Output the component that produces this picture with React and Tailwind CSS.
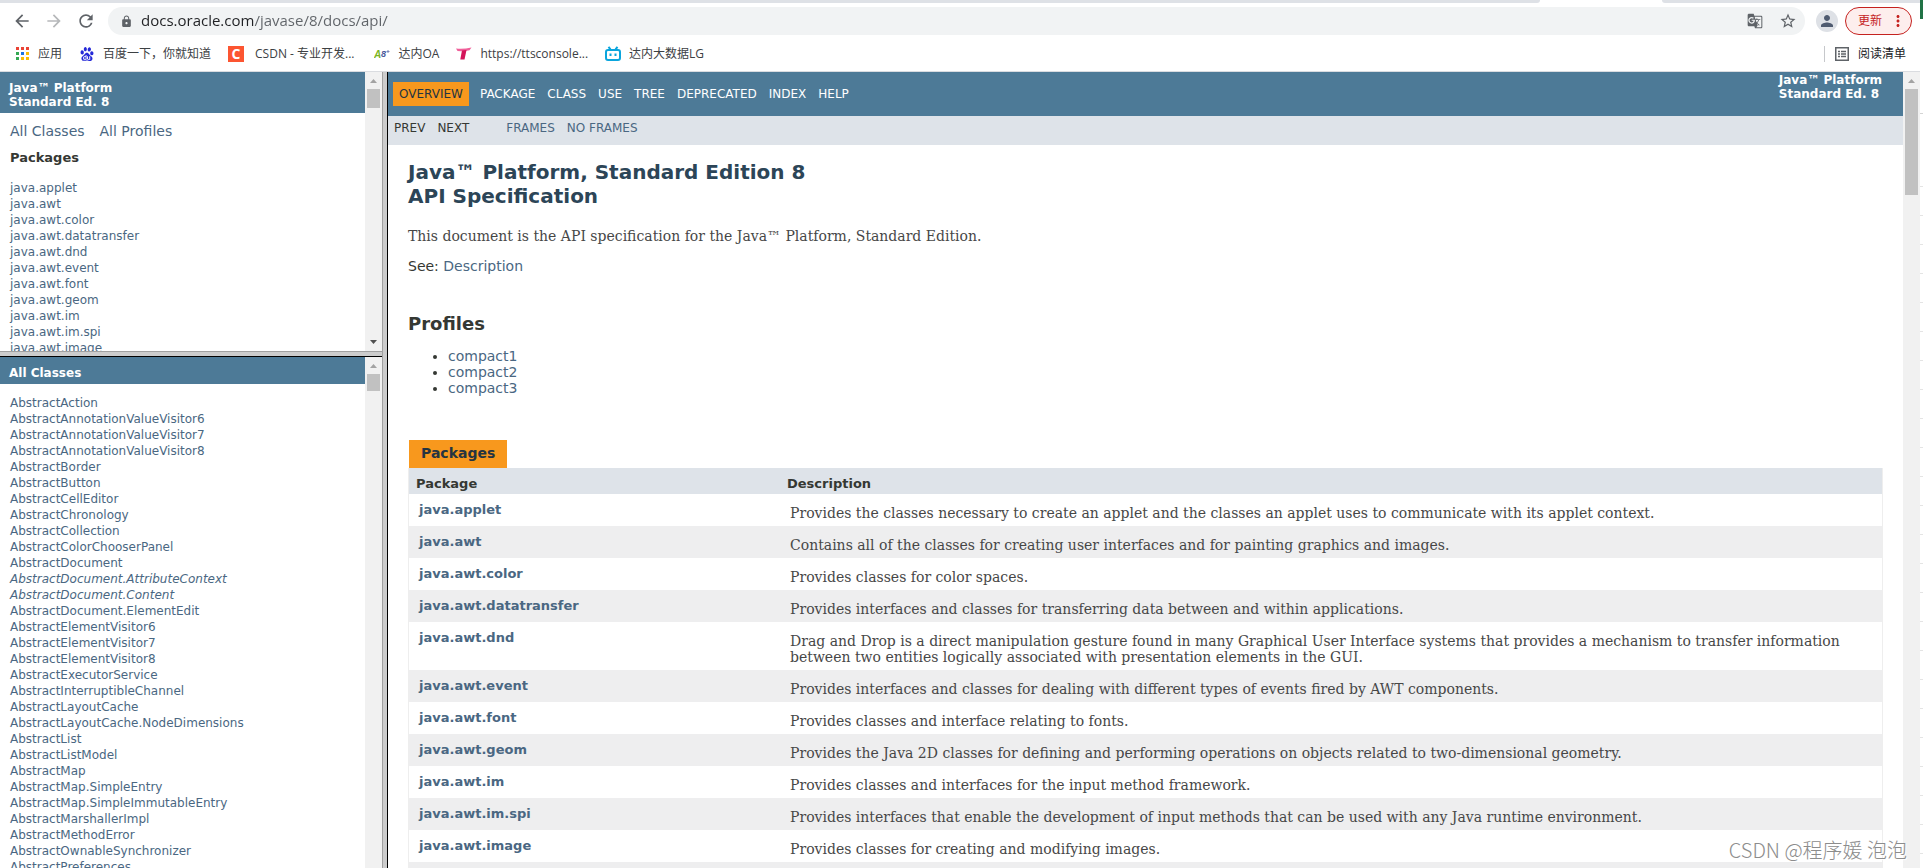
import React, { useState } from 'react';
import {
  MdArrowBack,
  MdArrowForward,
  MdRefresh,
  MdLock,
  MdGTranslate,
  MdStarBorder,
  MdPerson,
  MdMoreVert,
} from 'react-icons/md';
import { SiBaidu } from 'react-icons/si';

const packageList = [
  'java.applet',
  'java.awt',
  'java.awt.color',
  'java.awt.datatransfer',
  'java.awt.dnd',
  'java.awt.event',
  'java.awt.font',
  'java.awt.geom',
  'java.awt.im',
  'java.awt.im.spi',
  'java.awt.image',
];

const classList = [
  { name: 'AbstractAction' },
  { name: 'AbstractAnnotationValueVisitor6' },
  { name: 'AbstractAnnotationValueVisitor7' },
  { name: 'AbstractAnnotationValueVisitor8' },
  { name: 'AbstractBorder' },
  { name: 'AbstractButton' },
  { name: 'AbstractCellEditor' },
  { name: 'AbstractChronology' },
  { name: 'AbstractCollection' },
  { name: 'AbstractColorChooserPanel' },
  { name: 'AbstractDocument' },
  { name: 'AbstractDocument.AttributeContext', isInterface: true },
  { name: 'AbstractDocument.Content', isInterface: true },
  { name: 'AbstractDocument.ElementEdit' },
  { name: 'AbstractElementVisitor6' },
  { name: 'AbstractElementVisitor7' },
  { name: 'AbstractElementVisitor8' },
  { name: 'AbstractExecutorService' },
  { name: 'AbstractInterruptibleChannel' },
  { name: 'AbstractLayoutCache' },
  { name: 'AbstractLayoutCache.NodeDimensions' },
  { name: 'AbstractList' },
  { name: 'AbstractListModel' },
  { name: 'AbstractMap' },
  { name: 'AbstractMap.SimpleEntry' },
  { name: 'AbstractMap.SimpleImmutableEntry' },
  { name: 'AbstractMarshallerImpl' },
  { name: 'AbstractMethodError' },
  { name: 'AbstractOwnableSynchronizer' },
  { name: 'AbstractPreferences' },
];

const packageRows = [
  ['java.applet', 'Provides the classes necessary to create an applet and the classes an applet uses to communicate with its applet context.'],
  ['java.awt', 'Contains all of the classes for creating user interfaces and for painting graphics and images.'],
  ['java.awt.color', 'Provides classes for color spaces.'],
  ['java.awt.datatransfer', 'Provides interfaces and classes for transferring data between and within applications.'],
  ['java.awt.dnd', 'Drag and Drop is a direct manipulation gesture found in many Graphical User Interface systems that provides a mechanism to transfer information between two entities logically associated with presentation elements in the GUI.'],
  ['java.awt.event', 'Provides interfaces and classes for dealing with different types of events fired by AWT components.'],
  ['java.awt.font', 'Provides classes and interface relating to fonts.'],
  ['java.awt.geom', 'Provides the Java 2D classes for defining and performing operations on objects related to two-dimensional geometry.'],
  ['java.awt.im', 'Provides classes and interfaces for the input method framework.'],
  ['java.awt.im.spi', 'Provides interfaces that enable the development of input methods that can be used with any Java runtime environment.'],
  ['java.awt.image', 'Provides classes for creating and modifying images.'],
];

const navItems = ['PACKAGE', 'CLASS', 'USE', 'TREE', 'DEPRECATED', 'INDEX', 'HELP'];

function AppsIcon() {
  const colors = ['#ea4335', '#ea4335', '#ea4335', '#34a853', '#1a73e8', '#fbbc04', '#34a853', '#fbbc04', '#fbbc04'];
  return (
    <svg className="h-[13px] w-[13px]" viewBox="0 0 13 13">
      {colors.map((c, i) => (
        <rect key={i} x={(i % 3) * 5} y={Math.floor(i / 3) * 5} width="3" height="3" fill={c} />
      ))}
    </svg>
  );
}

function TvIcon() {
  return (
    <svg className="h-4 w-4" viewBox="0 0 16 16" fill="none" stroke="#0aa5dd" strokeWidth="2">
      <rect x="1" y="4" width="14" height="10" rx="2" />
      <path d="M3.5 0.800l2 2.500M12.500 0.800l-2 2.500" />
      <path d="M5.500 7.500v2.500M10.500 7.500v2.500" />
    </svg>
  );
}

function RibbonIcon() {
  return (
    <svg className="h-4 w-4" viewBox="0 0 16 16">
      <path d="M0 2.500 Q7 3.500 15.500 1.500 L13.500 4.200 Q8 5.500 1.500 5 Z" fill="#f0609a" />
      <path d="M6 4.500 L10.500 4 L8.500 13.500 L4.300 13.500 Z" fill="#d4145a" />
    </svg>
  );
}

function LetterIcon() {
  return (
    <svg className="h-4 w-4" viewBox="0 0 16 16" fontFamily="Liberation Sans" fontWeight="bold" fontStyle="italic">
      <text x="0" y="12" fontSize="10" fill="#7ab51d">A</text>
      <text x="7" y="11" fontSize="9" fill="#4a5a9a">8</text>
      <path d="M14 4v3M12.500 5.500h3" stroke="#7a86b5" strokeWidth="1" />
    </svg>
  );
}

function ReadingListIcon() {
  return (
    <svg className="h-[14px] w-[14px]" viewBox="0 0 14 14" fill="none" stroke="#5f6368">
      <rect x="0.750" y="0.750" width="12.500" height="12.500" strokeWidth="1.500" />
      <path d="M3 4.500h2M6 4.500h5M3 7h2M6 7h5M3 9.500h2M6 9.500h5" strokeWidth="1.500" />
    </svg>
  );
}

function Bookmark({ icon, children }) {
  return (
    <a href="#" className="flex items-center gap-2 whitespace-nowrap">
      <span className="flex h-4 w-4 items-center justify-center">{icon}</span>
      <span>{children}</span>
    </a>
  );
}

function Scrollbar({ thumb, withDown = false }) {
  return (
    <div className="flex w-[17px] shrink-0 flex-col items-center bg-[#f1f1f1]">
      <svg className="h-[17px] w-[17px] shrink-0" viewBox="0 0 17 17">
        <path d="M5 11h7L8.500 7z" fill="#a3a3a3" />
      </svg>
      <div className={`w-[13px] bg-[#c1c1c1] ${thumb}`} />
      {withDown && (
        <svg className="mt-auto h-[17px] w-[17px] shrink-0" viewBox="0 0 17 17">
          <path d="M5 6h7L8.500 10z" fill="#505050" />
        </svg>
      )}
    </div>
  );
}

function BrowserBar() {
  const [url, setUrl] = useState('docs.oracle.com/javase/8/docs/api/');

  return (
    <header className="shrink-0 border-b border-[#dadce0] bg-white font-['Open_Sans','Noto_Sans_CJK_SC',sans-serif]">
      <div className="flex h-[3px]">
        <div className="grow rounded-br-lg bg-[#dee1e6]" />
        <div className="w-[122px]" />
        <div className="w-[258px] rounded-bl-lg bg-[#dee1e6]" />
      </div>

      <div className="flex h-9 items-center pr-2 pl-3 text-[#5f6368]">
        <div className="flex w-24 shrink-0 items-center gap-3">
          <button aria-label="Back"><MdArrowBack size={20} /></button>
          <button aria-label="Forward" className="text-[#b6b8ba]"><MdArrowForward size={20} /></button>
          <button aria-label="Reload"><MdRefresh size={20} /></button>
        </div>
        <div className="flex h-7 grow items-center rounded-full bg-[#f1f3f4] pr-2 pl-3">
          <MdLock size={13} />
          <input
            type="text"
            aria-label="Address"
            value={url}
            onChange={(e) => setUrl(e.target.value)}
            className="ml-2 grow bg-[linear-gradient(90deg,#202124_113px,#5f6368_113px)] bg-clip-text pb-px text-[15px] text-transparent outline-none"
          />
          <div className="flex items-center gap-4">
            <button aria-label="Translate"><MdGTranslate size={16} /></button>
            <button aria-label="Bookmark this page"><MdStarBorder size={18} /></button>
          </div>
        </div>
        <button aria-label="Profile" className="ml-[11px] flex h-[22px] w-[22px] items-center justify-center rounded-full bg-[#dee1e6] text-[#4f5b70]">
          <MdPerson size={18} />
        </button>
        <button className="ml-[7px] flex h-7 w-[67px] items-center justify-between rounded-full border border-[#c5221f] bg-[#fdeeed] pr-1 pl-3 text-xs text-[#c5221f]">
          更新
          <MdMoreVert size={18} />
        </button>
      </div>

      <nav className="flex h-8 items-center gap-[17px] px-[14px] pb-[3px] text-xs text-[#3c4043]">
        <Bookmark icon={<AppsIcon />}>应用</Bookmark>
        <Bookmark icon={<SiBaidu size={14} color="#2529d8" />}>百度一下，你就知道</Bookmark>
        <Bookmark icon={<span className="flex h-4 w-4 items-center justify-center bg-[#fc5531] text-sm font-bold text-white">C</span>}>
          <span className="px-[3px]">CSDN - 专业开发...</span>
        </Bookmark>
        <Bookmark icon={<LetterIcon />}>达内OA</Bookmark>
        <Bookmark icon={<RibbonIcon />}>https://ttsconsole...</Bookmark>
        <Bookmark icon={<TvIcon />}>达内大数据LG</Bookmark>
        <div className="ml-auto flex h-4 items-center border-l border-[#c6c8cb] pl-[9px] text-[#202124]">
          <Bookmark icon={<ReadingListIcon />}>阅读清单</Bookmark>
        </div>
      </nav>
    </header>
  );
}

function PackagesFrame() {
  return (
    <section className="flex h-[279px] shrink-0">
      <div className="grow overflow-hidden">
        <div className="bg-[#4d7a97] pt-[9px] pb-1 pl-[9px] text-xs leading-[14px] font-bold text-white">
          Java™ Platform
          <br />
          Standard Ed. 8
        </div>
        <div className="flex gap-[15px] px-[10px] pt-[10px] text-sm leading-4 text-[#4a6782]">
          <a href="#">All Classes</a>
          <a href="#">All Profiles</a>
        </div>
        <h2 className="px-[10px] pt-[11px] text-[13px] leading-4 font-bold">Packages</h2>
        <ul className="px-[10px] pt-[14px] text-xs leading-4 text-[#4a6782]">
          {packageList.map((name) => (
            <li key={name}><a href="#">{name}</a></li>
          ))}
        </ul>
      </div>
      <Scrollbar thumb="h-[19px]" withDown />
    </section>
  );
}

function ClassesFrame() {
  return (
    <section className="flex min-h-0 grow">
      <div className="grow overflow-hidden">
        <h1 className="bg-[#4d7a97] pt-[9px] pb-1 pl-[9px] text-xs leading-[14px] font-bold text-white">All Classes</h1>
        <ul className="px-[10px] pt-[11px] text-xs leading-4 text-[#4a6782]">
          {classList.map(({ name, isInterface }) => (
            <li key={name}>
              <a href="#" className={isInterface ? 'italic' : ''}>{name}</a>
            </li>
          ))}
        </ul>
      </div>
      <Scrollbar thumb="h-[17px]" />
    </section>
  );
}

function OverviewFrame() {
  return (
    <main className="flex min-w-0 grow">
      <div className="grow overflow-hidden">
        <div className="flex h-11 items-start bg-[#4d7a97] pr-[21px] pl-[5px] text-xs text-white">
          <nav className="mt-[10px] flex h-6 items-center gap-[11px]">
            <span className="bg-[#f8981d] px-[6px] py-1 text-[#253441]">OVERVIEW</span>
            <div className="flex gap-3">
              {navItems.map((item) => (
                <a key={item} href="#">{item}</a>
              ))}
            </div>
          </nav>
          <div className="ml-auto pt-px leading-[14px] font-bold">
            Java™ Platform
            <br />
            Standard Ed. 8
          </div>
        </div>
        <div className="flex h-[29px] gap-3 bg-[#dee3e9] pt-1 pl-[6px] text-xs">
          <span>PREV</span>
          <span>NEXT</span>
          <a href="#" className="ml-[25px] text-[#4a6782]">FRAMES</a>
          <a href="#" className="text-[#4a6782]">NO FRAMES</a>
        </div>

        <div className="px-5 pt-[15px]">
          <h1 className="text-xl leading-6 font-bold text-[#2c4557]">
            Java™ Platform, Standard Edition 8
            <br />
            API Specification
          </h1>
          <p className="pt-5 font-['DejaVu_Serif',serif] text-sm leading-4 text-[#474747]">
            This document is the API specification for the Java™ Platform, Standard Edition.
          </p>
          <p className="pt-[14px] text-sm leading-4">
            See: <a href="#" className="text-[#4a6782]">Description</a>
          </p>

          <h2 className="pt-10 text-lg leading-5 font-bold">Profiles</h2>
          <ul className="list-disc pt-[14px] pl-10 text-sm leading-4">
            <li><a href="#" className="text-[#4a6782]">compact1</a></li>
            <li><a href="#" className="text-[#4a6782]">compact2</a></li>
            <li><a href="#" className="text-[#4a6782]">compact3</a></li>
          </ul>

          <table className="mt-11 w-full table-fixed border-collapse text-left">
            <caption className="pl-px text-left text-sm font-bold text-[#253441]">
              <span className="block w-fit bg-[#f8981d] px-3 pb-[2px] leading-[26px]">Packages</span>
            </caption>
            <thead>
              <tr className="border-x border-[#eee] bg-[#dee3e9] text-[13px] leading-4">
                <th className="w-1/4 px-[7px] pt-2 pb-[2px]">Package</th>
                <th className="px-[10px] pt-2 pb-[2px]">Description</th>
              </tr>
            </thead>
            <tbody>
              {packageRows.map(([name, description]) => (
                <tr key={name} className="border-x border-[#eee] align-top even:bg-[#eeeeef]">
                  <th className="px-[10px] pt-2 text-[13px] leading-4 text-[#4a6782]">
                    <a href="#">{name}</a>
                  </th>
                  <td className="px-[13px] pt-[11px] pb-[5px] font-['DejaVu_Serif',serif] text-sm leading-4 text-[#474747]">{description}</td>
                </tr>
              ))}
              <tr className="h-8 border-x border-[#eee] even:bg-[#eeeeef]">
                <th />
                <td />
              </tr>
            </tbody>
          </table>
        </div>
      </div>
      <Scrollbar thumb="h-[106px]" />
    </main>
  );
}

export default function App() {
  return (
    <div className="relative flex h-screen overflow-hidden bg-white font-['DejaVu_Sans',sans-serif] text-[#353833]">
      <div className="flex min-w-0 grow flex-col">
        <BrowserBar />
        <div className="flex min-h-0 grow">
          <aside className="flex w-[382px] shrink-0 flex-col">
            <PackagesFrame />
            <div className="h-[6px] shrink-0 border-t border-b border-t-[#a0a0a0] border-b-black bg-[#ccc]" />
            <ClassesFrame />
          </aside>
          <div className="w-[6px] shrink-0 border-r border-l border-r-black border-l-[#a0a0a0] bg-[#ccc]" />
          <OverviewFrame />
        </div>
      </div>

      {/* sliver of the spreadsheet window behind the browser */}
      <div className="flex w-[3px] shrink-0 flex-col">
        <div className="h-[19px] bg-[#217346]" />
        <div className="mt-[94px] h-px bg-[#d4d4d4]" />
        <div className="mt-11 grow bg-[repeating-linear-gradient(180deg,transparent_0_28px,#e4e4e4_28px_29px)]" />
      </div>

      <div className="absolute right-4 bottom-1 font-['Noto_Sans_CJK_SC',sans-serif] text-xl leading-7 font-light text-[#8c8c8c] [text-shadow:1px_1px_1px_#fff]">
        CSDN @程序媛 泡泡
      </div>
    </div>
  );
}
